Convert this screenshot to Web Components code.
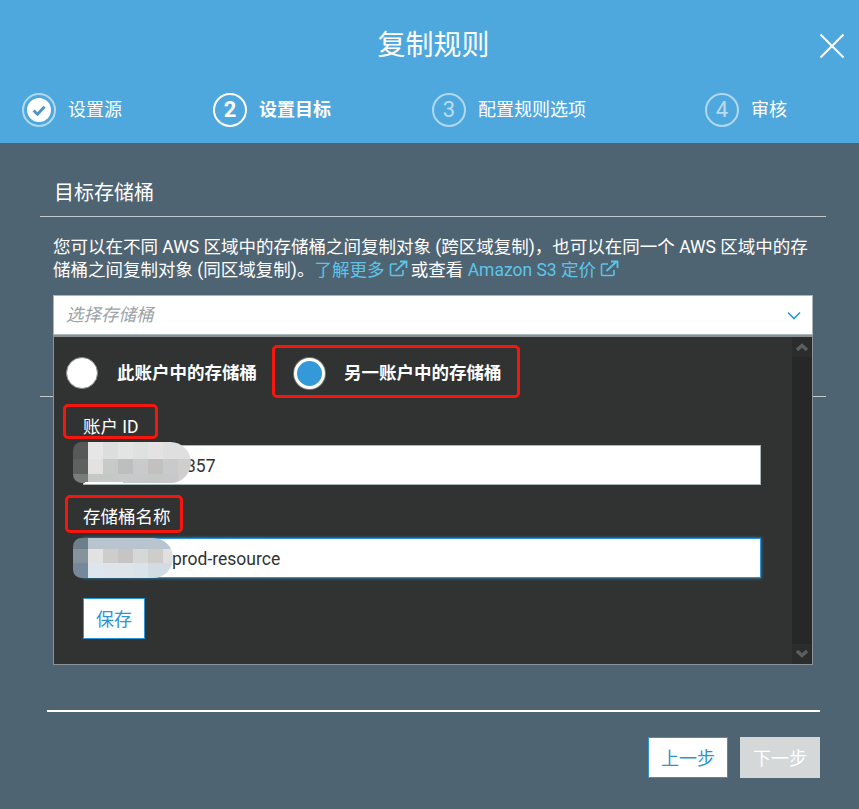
<!DOCTYPE html>
<html lang="zh">
<head>
<meta charset="utf-8">
<title>复制规则</title>
<style>
  html, body { margin: 0; height: 100%; background: #4f6472; }
  body { font-family: Roboto, "Noto Sans CJK SC", sans-serif; overflow: hidden; }
</style>
</head>
<body>
<replication-modal></replication-modal>

<script>
// stepper item in the blue header
class stepItem extends HTMLElement {
  connectedCallback() {
    const state = this.getAttribute('state') || '';
    const num = this.getAttribute('num');
    let glyph = `<span class="num">${num}</span>`;
    if (state === 'done') {
      glyph = `<svg width="24" height="24" viewBox="0 0 24 24"><circle cx="12" cy="12" r="12" fill="#fff"/><path d="M6.6 12.4l3.9 3.9 7-7.6" fill="none" stroke="#4c93c6" stroke-width="2.8"/></svg>`;
    }
    this.attachShadow({ mode: 'open' }).innerHTML = `
      <style>
        :host { display: flex; align-items: center; gap: 12px; color: #fff; font-size: 18px; line-height: 34px; }
        .ring { box-sizing: border-box; width: 34px; height: 34px; border-radius: 50%; border: 2px solid rgba(255,255,255,.55);
          display: flex; align-items: center; justify-content: center; }
        .num { font-size: 22px; line-height: 1; opacity: .6; }
        :host([state=active]) { font-weight: 700; }
        :host([state=active]) .ring { border-color: #fff; }
        :host([state=active]) .num { opacity: 1; }
      </style>
      <span class="ring">${glyph}</span><span><slot></slot></span>`;
  }
}
customElements.define('step-item', stepItem);

class radioOption extends HTMLElement {
  connectedCallback() {
    this.attachShadow({ mode: 'open' }).innerHTML = `
      <style>
        :host { display: flex; align-items: center; gap: 19px; color: #fff; font-size: 17.5px; font-weight: 700; }
        .dot { box-sizing: border-box; width: 32px; height: 32px; border-radius: 50%; background: #fff; border: 1px solid #888; }
        .txt { padding-bottom: 3px; }
        :host([checked]) .dot { width: 31px; height: 31px; background: #3399d8; border: 3px solid #fff; box-shadow: 0 0 0 1px #777; }
      </style>
      <span class="dot"></span><span class="txt"><slot></slot></span>`;
  }
}
customElements.define('radio-option', radioOption);

// label plus white text box
class textField extends HTMLElement {
  connectedCallback() {
    this.attachShadow({ mode: 'open' }).innerHTML = `
      <style>
        :host { display: block; color: #fff; font-size: 17.5px; }
        label { display: block; height: 25px; line-height: 25px; margin-bottom: var(--label-gap, 5px); }
        .box { box-sizing: border-box; width: 678px; height: 40px; background: #fff; border: 1px solid #aab7b8;
          color: #333; font-size: 17.5px; line-height: 40px; padding-left: var(--pad, 88px); }
        :host([focused]) .box { border-color: #2b95d6; box-shadow: 0 0 3px #2b95d6; }
      </style>
      <label>${this.getAttribute('label')}</label>
      <div class="box"><slot></slot></div>`;
  }
}
customElements.define('text-field', textField);

// pixelated block that hides part of a value
class mosaicBlock extends HTMLElement {
  connectedCallback() {
    const rows = this.getAttribute('cells').split('|').map((r) => r.split(','));
    const cells = rows.map((r) => r.map((c) => `<i style="background:${c}"></i>`).join('')).join('');
    this.attachShadow({ mode: 'open' }).innerHTML = `
      <style>
        :host { display: grid; position: absolute; grid-template-columns: 15px repeat(${rows[0].length - 1}, 15px);
          grid-template-rows: ${this.getAttribute('rows')};
          overflow: hidden; border-radius: 9px 22px 22px 9px; }
        i { display: block; }
      </style>${cells}`;
  }
}
customElements.define('mosaic-block', mosaicBlock);

class bucketPanel extends HTMLElement {
  connectedCallback() {
    this.attachShadow({ mode: 'open' }).innerHTML = `
      <style>
        :host { display: block; position: absolute; left: 0; right: 0; top: 40px; height: 330px; box-sizing: border-box;
          background: #313333; border: 1px solid #8b9296; border-top-width: 2px; z-index: 2; }
        .inner { padding: 20px 0 0 12px; }
        .radios { display: flex; gap: 37px; align-items: center; height: 32px; margin-bottom: 26px; }
        .fields { display: flex; flex-direction: column; gap: 20px; padding-left: 17px; position: relative; }
        .save { box-sizing: border-box; display: block; width: 62px; height: 41px; margin: 20px 0 0 17px; background: #fff;
          border: 1px solid #2b95d6; color: #2b95d6; font: inherit; font-size: 18px; padding: 0 0 2px; }
        .bar { position: absolute; right: 0; top: 0; bottom: 0; width: 20px; background: #262828; }
        .bar svg { position: absolute; left: 0; width: 20px; height: 20px; background: #2b2d2d; }
        .bar .up { top: 0; }
        .bar .down { bottom: 0; }
        .red { position: absolute; box-sizing: border-box; border: 3px solid #f5170e; border-radius: 5px; pointer-events: none; }
        mosaic-block { z-index: 3; }
        .edge { position: absolute; left: 31px; top: 145px; width: 38px; height: 2px; background: #fff; z-index: 4; }
      </style>
      <div class="inner">
        <div class="radios">
          <radio-option>此账户中的存储桶</radio-option>
          <radio-option checked>另一账户中的存储桶</radio-option>
        </div>
        <div class="fields">
          <text-field label="账户 ID" style="--pad:102px">357</text-field>
          <text-field label="存储桶名称" focused style="--label-gap:8px">prod-resource</text-field>
        </div>
        <button class="save">保存</button>
      </div>
      <div class="bar">
        <svg class="up" viewBox="0 0 20 20"><path d="M5 13l5-4.5 5 4.5" fill="none" stroke="#5c5f5f" stroke-width="3.4"/></svg>
        <svg class="down" viewBox="0 0 20 20"><path d="M5 7l5 4.5 5-4.5" fill="none" stroke="#5c5f5f" stroke-width="3.4"/></svg>
      </div>
      <mosaic-block rows="17px 15px 9px" style="left:19px;top:105px;width:118px;height:41px"
        cells="#575959,#e6e6e6,#dcdddd,#e3e4e4,#dfe0e0,#e3e3e3,#dfdfdf,#dfdfdf|#5f6161,#e3e2e0,#c8caca,#bdbebe,#c8cacc,#c2c1bf,#c8cacc,#cfcecc|#7a7c7c,#c6c8c8,#c6c8c8,#c8caca,#c8c8c8,#c6c8c8,#c8c8c8,#cfcfcf"></mosaic-block>
      <div class="edge"></div>
      <mosaic-block rows="11px 14px 15px" style="left:19px;top:201px;width:100px;height:40px"
        cells="#6d7f8b,#b8c4ce,#b8c4ce,#b8c4ce,#b8c4ce,#b8c4ce,#b8c4ce|#85939d,#e2e2e2,#cfcdca,#c6c5c3,#d6d7d7,#cfcdca,#e0e0e0|#76899a,#dde6ee,#dde4ea,#dde4ea,#dae2ea,#d2dce4,#d2dce4"></mosaic-block>
      <div class="red" style="left:218px;top:8px;width:248px;height:53px"></div>
      <div class="red" style="left:9px;top:67px;width:95px;height:35px"></div>
      <div class="red" style="left:11px;top:158px;width:118px;height:38px"></div>`;
  }
}
customElements.define('bucket-panel', bucketPanel);

class replicationModal extends HTMLElement {
  connectedCallback() {
    const ext = `<svg class="ext" width="19" height="17" viewBox="0 0 19 17"><path d="M14 10v4.5a1 1 0 0 1-1 1H2.5a1 1 0 0 1-1-1V5a1 1 0 0 1 1-1H8" fill="none" stroke="currentColor" stroke-width="1.6"/><path d="M6.5 11L16 2M11 1.5h6.5V8" fill="none" stroke="currentColor" stroke-width="1.8"/></svg>`;
    this.attachShadow({ mode: 'open' }).innerHTML = `
      <style>
        :host { display: block; color: #fff; }
        header { height: 143px; background: #4ea8dd; position: relative; box-sizing: border-box; padding-top: 26px; }
        h1 { margin: 0; height: 40px; font-weight: 400; font-size: 28px; line-height: 40px; text-align: center; padding-left: 8px; }
        .close { position: absolute; right: 14px; top: 33px; }
        .steps { margin-top: 27px; padding-left: 22px; display: grid; grid-template-columns: 191px 219px 273px auto; }
        main { padding: 38px 33px 0 40px; }
        h2 { margin: 0; font-weight: 400; font-size: 20px; line-height: 24px; padding: 0 0 11px 14px; border-bottom: 1px solid #c4c9cc; }
        p { margin: 19px 0 13px 13px; font-size: 17.5px; line-height: 23px; width: 760px; }
        a { color: #5cc4ea; text-decoration: none; }
        .ext { vertical-align: -1px; margin-right: 3px; }
        .picker { position: relative; margin-left: 13px; width: 760px; height: 369px; }
        .select { box-sizing: border-box; height: 40px; background: #fff; border: 1px solid #aab7b8; color: #9aa3a8;
          font-style: italic; font-size: 17.5px; line-height: 38px; padding-left: 12px; position: relative; }
        .select svg { position: absolute; right: 11px; top: 15px; }
        .under { margin: -268px 0 0 0; height: 1px; background: #c4c9cc; position: relative; }
        .foot { margin: 313px 6px 0 7px; border-top: 2px solid #fff; padding-top: 25px; display: flex; justify-content: flex-end; gap: 12px; }
        .btn { box-sizing: border-box; width: 80px; height: 41px; padding-bottom: 2px; display: flex; align-items: center; justify-content: center; font-size: 18px; }
        .prev { background: #fff; border: 1px solid #2b95d6; color: #2b95d6; }
        .next { background: #d5d8d8; color: #fff; }
      </style>
      <header>
        <h1>复制规则</h1>
        <svg class="close" width="26" height="26" viewBox="0 0 26 26"><path d="M1.5 1.5l23 23M24.5 1.5l-23 23" stroke="#fff" stroke-width="2" fill="none"/></svg>
        <div class="steps">
          <step-item state="done" num="1">设置源</step-item>
          <step-item state="active" num="2">设置目标</step-item>
          <step-item num="3">配置规则选项</step-item>
          <step-item num="4">审核</step-item>
        </div>
      </header>
      <main>
        <h2>目标存储桶</h2>
        <p>您可以在不同 AWS 区域中的存储桶之间复制对象 (跨区域复制)，也可以在同一个 AWS 区域中的存储桶之间复制对象 (同区域复制)。<a>了解更多 ${ext}</a>或查看 <a>Amazon S3 定价 ${ext}</a></p>
        <div class="picker">
          <div class="select">选择存储桶
            <svg width="14" height="9" viewBox="0 0 14 9"><path d="M1 1.5l6 6 6-6" fill="none" stroke="#2b95d6" stroke-width="1.6"/></svg>
          </div>
          <bucket-panel></bucket-panel>
        </div>
        <div class="under"></div>
        <div class="foot">
          <div class="btn prev">上一步</div>
          <div class="btn next">下一步</div>
        </div>
      </main>`;
  }
}
customElements.define('replication-modal', replicationModal);
</script>
</body>
</html>
